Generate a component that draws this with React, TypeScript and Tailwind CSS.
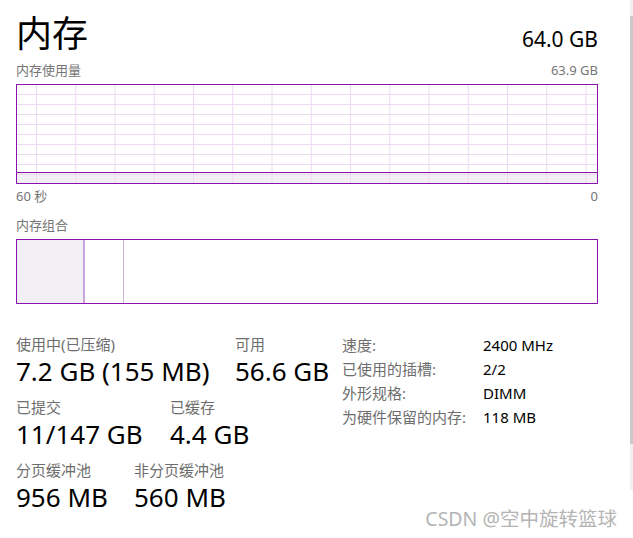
import React from 'react';

const font = { fontFamily: '"Noto Sans", "Noto Sans CJK SC", sans-serif' };

function UsageGraph() {
  const w = 582;
  const h = 100;
  const vLines = Array.from({ length: 15 }, (_, i) => 20.5 + i * 39.25);
  const hLines = Array.from({ length: 9 }, (_, i) => 10.5 + i * 10);
  return (
    <svg width={w} height={h} className="block shrink-0">
      <rect x="0" y="88" width={w} height={12} fill="#f2f0f4" />
      {hLines.map((y) => (
        <line key={'h' + y} x1="1" x2={w - 1} y1={y} y2={y} stroke="#ecdaf2" strokeWidth="1" />
      ))}
      {vLines.map((x) => (
        <line key={'v' + x} x1={x} x2={x} y1="1" y2={h - 1} stroke="#ecdaf2" strokeWidth="1" />
      ))}
      <line x1="0" x2={w} y1="88.5" y2="88.5" stroke="#8b12ae" strokeWidth="1" />
      <rect x="0.5" y="0.5" width={w - 1} height={h - 1} fill="none" stroke="#8b12ae" strokeWidth="1" />
    </svg>
  );
}

function Stat({ label, value, className }: { label: string; value: string; className: string }) {
  return (
    <div className={className}>
      <div className="text-[15px] leading-[20px] text-[#6e6e6e] whitespace-nowrap">{label}</div>
      <div className="text-[26px] leading-[34px] text-black whitespace-nowrap">{value}</div>
    </div>
  );
}

export default function App() {
  const specs = [
    ['速度:', '2400 MHz'],
    ['已使用的插槽:', '2/2'],
    ['外形规格:', 'DIMM'],
    ['为硬件保留的内存:', '118 MB'],
  ];

  return (
    <div className="relative w-[633px] h-[538px] bg-white flex overflow-hidden" style={font}>
      <div className="flex-1 pl-4 pr-[32px] flex flex-col">
        {/* header */}
        <div className="shrink-0 flex justify-between items-baseline pt-[11px] h-[60px]">
          <h1 className="text-[36px] leading-[46px] text-black">内存</h1>
          <span className="text-[21px] text-black">64.0 GB</span>
        </div>
        <div className="shrink-0 flex justify-between text-[13px] leading-[20px] text-[#767676] h-[24px]">
          <span>内存使用量</span>
          <span>63.9 GB</span>
        </div>
        <UsageGraph />
        <div className="shrink-0 flex justify-between text-[13px] leading-[24px] text-[#767676] h-[30px]">
          <span>60 秒</span>
          <span>0</span>
        </div>
        <div className="shrink-0 text-[13px] leading-[22px] text-[#767676] h-[25px]">内存组合</div>
        <div className="shrink-0 h-[65px] border border-[#8b12ae] flex">
          <div className="w-[66px] bg-[#f2f0f4]" />
          <div className="w-[2px] bg-[#caa5da]" />
          <div className="w-[38px]" />
          <div className="w-px bg-[#ccb4d8]" />
          <div className="flex-1" />
        </div>

        {/* stats */}
        <div className="shrink-0 flex mt-[30px]">
          <div className="w-[326px] flex flex-col gap-[9px]">
            <div className="flex">
              <Stat className="w-[219px]" label="使用中(已压缩)" value="7.2 GB (155 MB)" />
              <Stat className="" label="可用" value="56.6 GB" />
            </div>
            <div className="flex">
              <Stat className="w-[154px]" label="已提交" value="11/147 GB" />
              <Stat className="" label="已缓存" value="4.4 GB" />
            </div>
            <div className="flex">
              <Stat className="w-[118px]" label="分页缓冲池" value="956 MB" />
              <Stat className="" label="非分页缓冲池" value="560 MB" />
            </div>
          </div>
          <div className="flex flex-col -mt-[1px]">
            {specs.map(([k, v]) => (
              <div key={k} className="flex text-[15px] leading-[24px]">
                <span className="w-[141px] text-[#6e6e6e]">{k}</span>
                <span className="text-black">{v}</span>
              </div>
            ))}
          </div>
        </div>
      </div>

      {/* scrollbar */}
      <div className="shrink-0 w-[4px] h-[490px] flex flex-col bg-[#f0f0f0]">
        <div className="h-[16px]" />
        <div className="h-[428px] bg-[#c9c9c9]" />
      </div>

      {/* watermark */}
      <div className="absolute right-[16px] top-[506px] text-[19.5px] leading-[26px] text-[#b4b4b4] whitespace-nowrap">
        CSDN @空中旋转篮球
      </div>
    </div>
  );
}
